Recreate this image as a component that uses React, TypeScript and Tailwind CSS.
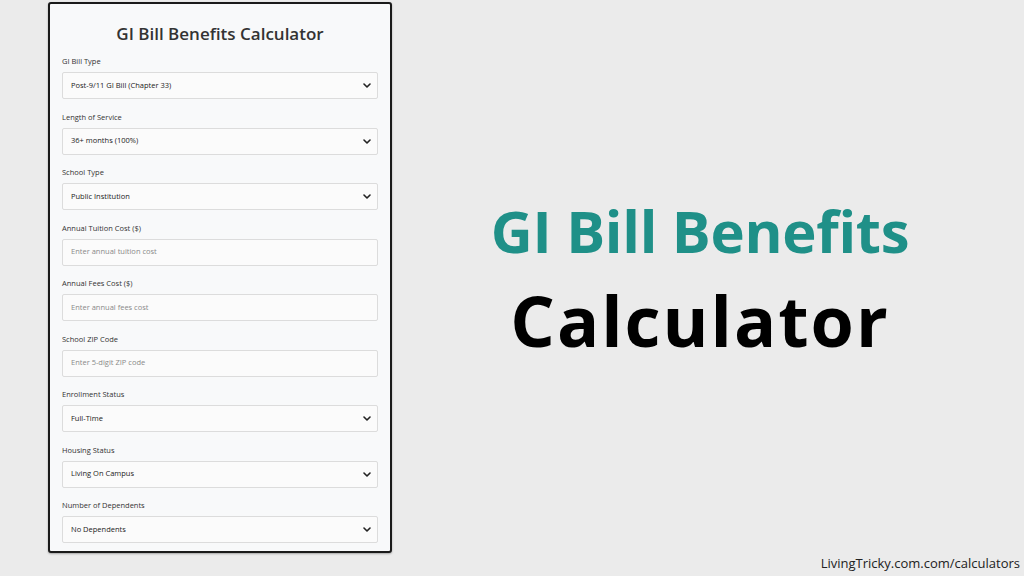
const fields: { label: string; value: string; kind: "select" | "input" }[] = [
  { label: "GI Bill Type", value: "Post-9/11 GI Bill (Chapter 33)", kind: "select" },
  { label: "Length of Service", value: "36+ months (100%)", kind: "select" },
  { label: "School Type", value: "Public Institution", kind: "select" },
  { label: "Annual Tuition Cost ($)", value: "Enter annual tuition cost", kind: "input" },
  { label: "Annual Fees Cost ($)", value: "Enter annual fees cost", kind: "input" },
  { label: "School ZIP Code", value: "Enter 5-digit ZIP code", kind: "input" },
  { label: "Enrollment Status", value: "Full-Time", kind: "select" },
  { label: "Housing Status", value: "Living On Campus", kind: "select" },
  { label: "Number of Dependents", value: "No Dependents", kind: "select" },
];

const Chevron = () => (
  <svg width="8" height="5" viewBox="0 0 8 5" className="shrink-0">
    <path d="M1 1l3 3 3-3" fill="none" stroke="#222" strokeWidth="1.6" strokeLinecap="round" strokeLinejoin="round" />
  </svg>
);

const Field = ({ label, value, kind }: (typeof fields)[number]) => (
  <div className="flex flex-col">
    <label className="text-[7.5px] leading-[11px] text-[#333] mb-[5px]">{label}</label>
    <div className="h-[27px] flex items-center justify-between pl-[8px] pr-[6px] bg-[#fbfbfb] border border-[#dcdcdc] rounded-[2px]">
      <span className={`text-[7.5px] ${kind === "select" ? "text-[#222]" : "text-[#8a8a8a]"}`}>{value}</span>
      {kind === "select" && <Chevron />}
    </div>
  </div>
);

export default function App() {
  return (
    <div className="w-[1024px] h-[576px] bg-[#ebebeb] flex overflow-hidden">
      <div className="ml-[48px] mt-[2px] w-[344px] h-[551px] bg-[#f8f9fa] border-2 border-[#1a1a1a] rounded-[3px] px-[12px] pt-[18px] font-['Open_Sans',sans-serif] shadow-[0_1px_2px_rgba(0,0,0,0.3)]">
        <h1 className="text-center text-[17px] leading-[24px] font-semibold text-[#333] mb-[10px]">
          GI Bill Benefits Calculator
        </h1>
        <div className="flex flex-col gap-[12.5px]">
          {fields.map((f) => (
            <Field key={f.label} {...f} />
          ))}
        </div>
      </div>
      <div className="flex-1 flex flex-col">
        <div className="flex-1 flex flex-col items-center justify-center pt-[3px] pr-[16px]">
          <div className="text-[#1f9088] text-[58px] leading-[70px] font-bold font-['Open_Sans',sans-serif] tracking-[-0.3px]">
            GI Bill Benefits
          </div>
          <div className="text-black text-[70px] leading-[84px] font-bold font-['Open_Sans',sans-serif] tracking-[2px] mt-[12px]">
            Calculator
          </div>
        </div>
        <div className="self-end pr-[4px] pb-[4px] text-[13px] leading-[18px] text-[#222] font-['Open_Sans',sans-serif]">
          LivingTricky.com.com/calculators
        </div>
      </div>
    </div>
  );
}
